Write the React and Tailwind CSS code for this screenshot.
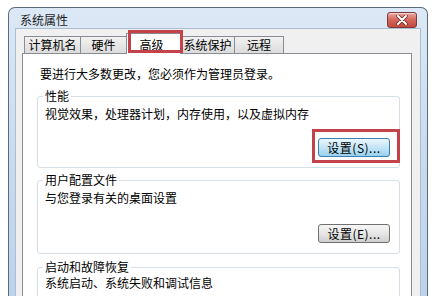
export default function App() {
  return (
    <div className="w-[446px] h-[296px] overflow-hidden bg-white pl-[8px] pt-[7px] font-['Noto_Sans_CJK_SC',sans-serif] text-[12px] leading-[14px] text-black">
      <div className="w-[420px] h-[300px] rounded-t-[7px] border border-b-0 border-[#5b6b7d] bg-gradient-to-b from-[#dce8f5] via-[#c9dbee] to-[#bcd2ea] flex flex-col">
        <TitleBar />
        <div className="mx-[6px] flex-1 bg-[#f0f0f0] border-l border-r border-t border-[#a9bdd3] pl-[6px] pt-[4px]">
          <Tabs />
          <Panel />
        </div>
      </div>
    </div>
  );
}

function TitleBar() {
  return (
    <div className="h-[29px] flex items-center pl-[11px] pr-[10px] pt-[4px]">
      <span className="text-[#1e1e1e]">系统属性</span>
      <button className="ml-auto w-[30px] h-[16px] rounded-[3px] border border-[#7c3a38] bg-gradient-to-b from-[#e9a79f] via-[#d4655b] to-[#c24a3f] flex items-center justify-center shadow-[inset_0_1px_0_rgba(255,255,255,0.5)]">
        <svg width="12" height="10" viewBox="0 0 12 10">
          <path d="M2 1 L10 9 M10 1 L2 9" stroke="#5a2420" strokeWidth="3.4" strokeLinecap="round" />
          <path d="M2 1 L10 9 M10 1 L2 9" stroke="#ffffff" strokeWidth="2" strokeLinecap="round" />
        </svg>
      </button>
    </div>
  );
}

function Tab({ w, label, first }) {
  return (
    <div
      className={`${w} ${first ? "ml-[2px]" : "-ml-px"} mt-[3px] h-[17px] border border-b-0 border-[#898c95] bg-gradient-to-b from-[#f2f2f2] to-[#dcdcdc] flex items-center justify-center`}
    >
      {label}
    </div>
  );
}

function Tabs() {
  return (
    <div className="flex items-start h-[21px]">
      <Tab w="w-[57px]" label="计算机名" first />
      <Tab w="w-[47px]" label="硬件" />
      <div className="relative z-10 -ml-px w-[55px] h-[21px] border border-b-0 border-[#898c95] bg-white flex justify-center pt-[4px] pr-[4px]">
        高级
        {/* red highlight around the selected tab */}
        <div className="absolute left-[1px] right-[-3px] top-[-4px] bottom-[1px] border-[3px] border-[#c4434b]" />
      </div>
      <Tab w="w-[55px]" label="系统保护" />
      <Tab w="w-[50px]" label="远程" />
    </div>
  );
}

function SetButton({ label, active }) {
  return (
    <div className="flex justify-end pr-[9px]">
      <div className="relative">
        <button
          className={`w-[72px] h-[19px] rounded-[3px] border flex items-center justify-center tracking-[0.5px] ${
            active
              ? "border-[#3c7fb1] bg-gradient-to-b from-[#eaf6fd] via-[#c4e5f6] to-[#98d1ef]"
              : "border-[#707070] bg-gradient-to-b from-[#f6f6f6] via-[#e6e6e6] to-[#cfcfcf]"
          }`}
        >
          {label}
        </button>
        {active && (
          <div className="absolute left-[-6px] right-[-10px] top-[-9px] bottom-[-6px] border-[3px] border-[#c4434b]" />
        )}
      </div>
    </div>
  );
}

function Group({ title, desc, children, className }) {
  return (
    <fieldset className={`w-[363px] border border-[#d5dfe5] rounded-[3px] pl-[7px] ${className}`}>
      <legend className="-ml-[2px] px-[2px]">{title}</legend>
      {desc}
      {children}
    </fieldset>
  );
}

function Panel() {
  return (
    <div className="-mt-px w-[390px] h-[260px] border border-[#898c95] bg-white pl-[14px]">
      <div className="mt-[13px] ml-[3px]">要进行大多数更改，您必须作为管理员登录。</div>
      <Group title="性能" className="mt-[8px] pt-[4px] pb-[10px]" desc="视觉效果，处理器计划，内存使用，以及虚拟内存">
        <div className="mt-[17px]">
          <SetButton label="设置(S)..." active />
        </div>
      </Group>
      <Group title="用户配置文件" className="mt-[5px] pt-[4px] pb-[10px]" desc="与您登录有关的桌面设置">
        <div className="mt-[19px]">
          <SetButton label="设置(E)..." />
        </div>
      </Group>
      <Group title="启动和故障恢复" className="mt-[6px] pt-[2px] pb-[20px]" desc="系统启动、系统失败和调试信息" />
    </div>
  );
}
